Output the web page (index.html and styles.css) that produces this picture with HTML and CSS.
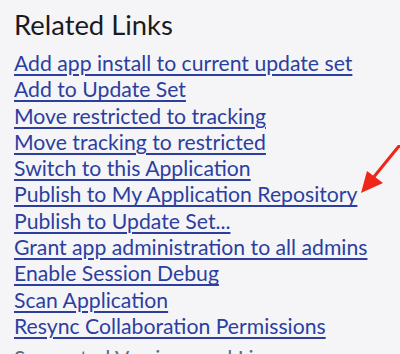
FILE: index.html
```html
<!DOCTYPE html>
<html>
<head>
<meta charset="utf-8">
<link rel="stylesheet" href="styles.css">
</head>
<body>
<div class="panel">
  <h2 class="title">Related Links</h2>
  <ul class="links">
    <li><a href="#">Add app install to current update set</a></li>
    <li><a href="#">Add to Update Set</a></li>
    <li><a href="#">Move restricted to tracking</a></li>
    <li><a href="#">Move tracking to restricted</a></li>
    <li><a href="#">Switch to this Application</a></li>
    <li><a href="#">Publish to My Application Repository</a></li>
    <li><a href="#">Publish to Update Set...</a></li>
    <li><a href="#">Grant app administration to all admins</a></li>
    <li><a href="#">Enable Session Debug</a></li>
    <li><a href="#">Scan Application</a></li>
    <li><a href="#">Resync Collaboration Permissions</a></li>
  </ul>
  <div class="more">Supported Versions and Licenses</div>
  <svg class="arrow" width="44" height="52" viewBox="0 0 44 52">
    <line x1="42" y1="1" x2="16" y2="33" stroke="#f0261b" stroke-width="3" stroke-linecap="round"/>
    <polygon points="4,48 10,26 26,38" fill="#f0261b"/>
  </svg>
</div>
</body>
</html>
```
FILE: styles.css
```css
html, body {
  margin: 0;
  padding: 0;
  background: #f5f5f8;
}
body {
  width: 400px;
  height: 354px;
  overflow: hidden;
  font-family: Lato, "Open Sans", sans-serif;
}
.panel {
  position: relative;
  padding: 9px 0 0 14px;
}
.title {
  margin: 0;
  font-weight: 400;
  font-size: 27.4px;
  line-height: 32px;
  color: #1b1b1d;
}
.links {
  list-style: none;
  margin: 9px 0 0 0;
  padding: 0;
}
.links li {
  font-size: 21.2px;
  line-height: 26.3px;
}
.links a {
  color: #2c3f9f;
  text-decoration: underline;
  text-decoration-thickness: 1.5px;
  text-underline-offset: 3px;
}
.more {
  margin-top: 6px;
  font-size: 21px;
  line-height: 26.3px;
  color: #5a6b8a;
}
.arrow {
  position: absolute;
  left: 357px;
  top: 145px;
}
```
